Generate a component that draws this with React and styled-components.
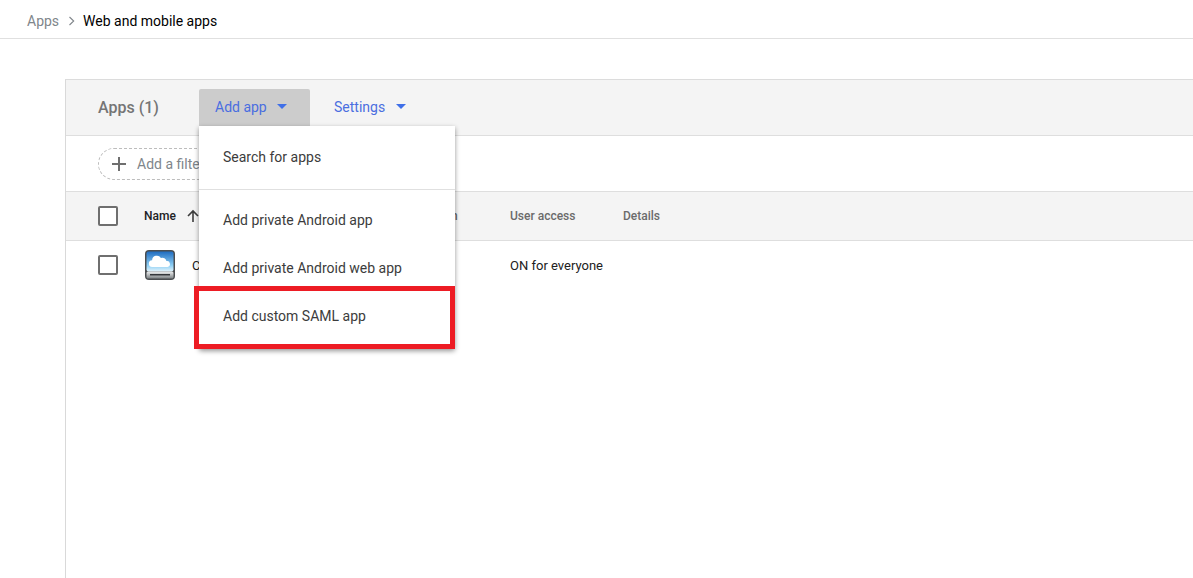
import React from 'react';
import styled, { createGlobalStyle } from 'styled-components';

const GlobalStyle = createGlobalStyle`
  html, body {
    margin: 0;
    height: 100%;
    overflow: hidden;
    background: #ffffff;
    font-family: Roboto, "Liberation Sans", sans-serif;
  }
  * { box-sizing: border-box; }
`;

const Page = styled.div`
  width: 1193px;
  height: 578px;
  display: flex;
  flex-direction: column;
  overflow: hidden;
`;

const Breadcrumb = styled.nav`
  height: 39px;
  flex: none;
  display: flex;
  align-items: center;
  padding: 3px 0 0 27px;
  border-bottom: 1px solid #e0e0e0;
  font-size: 14px;
`;

const CrumbParent = styled.span`
  color: #80868b;
`;

const CrumbArrow = styled.svg`
  width: 8px;
  height: 10px;
  margin: 0 7px 0 9px;
`;

const CrumbCurrent = styled.span`
  color: #000000;
`;

const Panel = styled.section`
  margin: 40px 0 0 65px;
  flex: 1;
  border-left: 1px solid #d9d9d9;
  border-top: 1px solid #dcdcdc;
`;

const Toolbar = styled.div`
  height: 56px;
  display: flex;
  align-items: flex-start;
  padding: 9px 0 0 32px;
  background: #f4f4f4;
  border-bottom: 1px solid #dedede;
`;

const PanelTitle = styled.h2`
  margin: 0 40px 0 0;
  width: 61px;
  font-size: 16px;
  line-height: 37px;
  font-weight: 500;
  color: #757575;
  white-space: nowrap;
`;

const ToolButton = styled.button`
  height: 37px;
  width: ${p => p.$width}px;
  display: flex;
  align-items: center;
  padding: 0 0 2px 16px;
  border: 0;
  border-radius: 2px 2px 0 0;
  background: ${p => (p.$open ? '#cccccc' : 'transparent')};
  color: #4a6ee0;
  font: 400 14px Roboto, sans-serif;
  margin-right: 8px;
`;

const Caret = styled.i`
  width: 0;
  height: 0;
  margin-left: ${p => p.$gap}px;
  border-left: 5.5px solid transparent;
  border-right: 5.5px solid transparent;
  border-top: 5.5px solid #3f6fe8;
`;

const FilterRow = styled.div`
  height: 56px;
  display: flex;
  align-items: center;
  padding: 0 0 0 32px;
  border-bottom: 1px solid #dedede;
`;

const FilterChip = styled.div`
  width: 180px;
  height: 32px;
  display: flex;
  align-items: center;
  padding-left: 12px;
  gap: 10px;
  border: 1px dashed #bdbdbd;
  border-radius: 16px;
  color: #80868b;
  font-size: 14px;
  white-space: nowrap;
`;

const HeadRow = styled.div`
  height: 49px;
  display: flex;
  align-items: center;
  background: #f4f4f4;
  border-bottom: 1px solid #dedede;
  font-size: 12px;
  font-weight: 500;
  color: #6b6b6b;
`;

const BodyRow = styled.div`
  height: 48px;
  display: flex;
  align-items: center;
  font-size: 13px;
  color: #212121;
`;

const CheckCell = styled.div`
  width: 78px;
  flex: none;
  padding-left: 32px;
`;

const Checkbox = styled.span`
  display: block;
  width: 20px;
  height: 20px;
  border: 2px solid #6f6f6f;
  border-radius: 2px;
  background: #ffffff;
`;

const NameHead = styled.div`
  width: 235px;
  flex: none;
  display: flex;
  align-items: center;
  gap: 10px;
  color: #202124;
`;

const AuthHead = styled.div`
  width: 131px;
  flex: none;
`;

const NameCell = styled.div`
  width: 366px;
  flex: none;
  display: flex;
  align-items: center;
  gap: 16px;
`;

const AccessHead = styled.div`
  width: 113px;
  flex: none;
`;

const Menu = styled.div`
  position: absolute;
  left: 199px;
  top: 126px;
  width: 256px;
  height: 223px;
  background: #ffffff;
  border-radius: 0 0 2px 2px;
  box-shadow: 0 2px 5px rgba(0, 0, 0, 0.42);
  font-size: 14px;
  color: #3c3c3c;
`;

const MenuHeader = styled.div`
  height: 64px;
  display: flex;
  align-items: center;
  padding: 0 0 2px 24px;
  border-bottom: 1px solid #e0e0e0;
`;

const MenuList = styled.div`
  padding-top: 6px;
`;

const MenuItem = styled.div`
  height: 48px;
  display: flex;
  align-items: center;
  padding-left: 24px;
`;

const Highlight = styled.div`
  position: absolute;
  left: 194px;
  top: 286px;
  width: 261px;
  height: 63px;
  border: 5px solid #ed1c24;
  pointer-events: none;
`;

function AppIcon() {
  return (
    <svg width="32" height="32" viewBox="0 0 32 32" aria-hidden="true">
      <defs>
        <linearGradient id="sky" x1="0" y1="0" x2="0" y2="1">
          <stop offset="0" stopColor="#1f6cc0" />
          <stop offset="0.7" stopColor="#8fd0f5" />
          <stop offset="1" stopColor="#e2f3fb" />
        </linearGradient>
        <linearGradient id="base" x1="0" y1="0" x2="0" y2="1">
          <stop offset="0" stopColor="#eef0f1" />
          <stop offset="1" stopColor="#7d8285" />
        </linearGradient>
      </defs>
      <rect x="1" y="1" width="30" height="30" rx="4" fill="#4a4d50" />
      <rect x="2.500" y="2.500" width="27" height="20" rx="2" fill="url(#sky)" />
      <rect x="2.500" y="22.500" width="27" height="7" rx="1.500" fill="url(#base)" />
      <rect x="6" y="25" width="20" height="1.500" fill="#33363a" />
      <path d="M8.500 18a3.400 3.400 0 0 1-.4-6.800 4.700 4.700 0 0 1 8.800-2.100 3.800 3.800 0 0 1 5.500 3 3 3 0 0 1 1.100 5.900z" fill="#ffffff" />
    </svg>
  );
}

export default function App() {
  return (
    <Page>
      <GlobalStyle />
      <Breadcrumb>
        <CrumbParent>Apps</CrumbParent>
        <CrumbArrow viewBox="0 0 8 10" aria-hidden="true">
          <path d="M1.500 1l4.200 4-4.200 4" fill="none" stroke="#80868b" strokeWidth="1.100" />
        </CrumbArrow>
        <CrumbCurrent>Web and mobile apps</CrumbCurrent>
      </Breadcrumb>

      <Panel>
        <Toolbar>
          <PanelTitle>Apps (1)</PanelTitle>
          <ToolButton $open $width={111}>
            Add app<Caret $gap={10} />
          </ToolButton>
          <ToolButton $width={110}>
            Settings<Caret $gap={11} />
          </ToolButton>
        </Toolbar>

        <FilterRow>
          <FilterChip>
            <svg width="16" height="16" viewBox="0 0 16 16" aria-hidden="true">
              <path d="M8 1v14M1 8h14" stroke="#6f6f6f" strokeWidth="2" />
            </svg>
            Add a filter
          </FilterChip>
        </FilterRow>

        <HeadRow>
          <CheckCell><Checkbox /></CheckCell>
          <NameHead>
            Name
            <svg width="14" height="14" viewBox="0 0 14 14" aria-hidden="true">
              <path d="M7 13V2M2 7l5-5 5 5" fill="none" stroke="#3c3c3c" strokeWidth="1.600" />
            </svg>
          </NameHead>
          <AuthHead>Authentication</AuthHead>
          <AccessHead>User access</AccessHead>
          <div>Details</div>
        </HeadRow>

        <BodyRow>
          <CheckCell><Checkbox /></CheckCell>
          <NameCell>
            <AppIcon />
            Cloud
          </NameCell>
          <div>ON for everyone</div>
        </BodyRow>
      </Panel>

      <Menu>
        <MenuHeader>Search for apps</MenuHeader>
        <MenuList>
          <MenuItem>Add private Android app</MenuItem>
          <MenuItem>Add private Android web app</MenuItem>
          <MenuItem>Add custom SAML app</MenuItem>
        </MenuList>
      </Menu>
      <Highlight />
    </Page>
  );
}
